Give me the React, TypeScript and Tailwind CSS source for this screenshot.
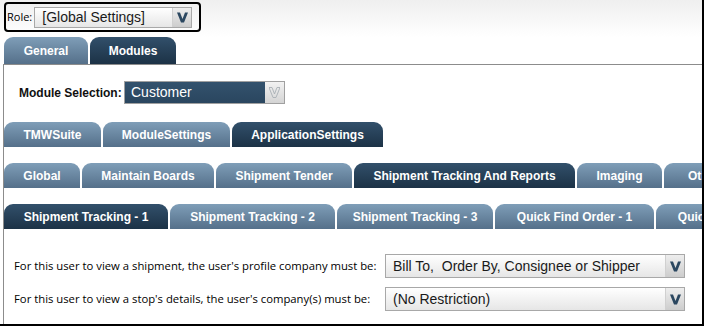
import clsx from 'clsx'

type TabDef = { label: string; w: string; active?: boolean }

const mainTabs: TabDef[] = [
  { label: 'General', w: 'w-[84px]' },
  { label: 'Modules', w: 'w-[86px]', active: true },
]

const suiteTabs: TabDef[] = [
  { label: 'TMWSuite', w: 'w-[97px]' },
  { label: 'ModuleSettings', w: 'w-[127px]' },
  { label: 'ApplicationSettings', w: 'w-[151px]', active: true },
]

const appTabs: TabDef[] = [
  { label: 'Global', w: 'w-[76px]' },
  { label: 'Maintain Boards', w: 'w-[132px]' },
  { label: 'Shipment Tender', w: 'w-[136px]' },
  { label: 'Shipment Tracking And Reports', w: 'w-[221px]', active: true },
  { label: 'Imaging', w: 'w-[85px]' },
  { label: 'Other', w: 'w-[80px]' },
]

const trackingTabs: TabDef[] = [
  { label: 'Shipment Tracking - 1', w: 'w-[164px]', active: true },
  { label: 'Shipment Tracking - 2', w: 'w-[165px]' },
  { label: 'Shipment Tracking - 3', w: 'w-[156px]' },
  { label: 'Quick Find Order - 1', w: 'w-[159px]' },
  { label: 'Quick Find Order - 2', w: 'w-[159px]' },
]

function TabRow({ tabs, tall }: { tabs: TabDef[]; tall?: boolean }) {
  return (
    <div className={clsx('flex gap-[2px]', tall ? 'h-[27px]' : 'h-[25px]')}>
      {tabs.map((t) => (
        <div
          key={t.label}
          className={clsx(
            'shrink-0 flex items-center justify-center rounded-t-[9px] text-white font-bold text-[12px] whitespace-nowrap',
            t.w,
            t.active
              ? 'bg-linear-to-b from-[#32506b] to-[#1c3246]'
              : 'bg-linear-to-b from-[#7f9eb8] to-[#55708a]'
          )}
        >
          {t.label}
        </div>
      ))}
    </div>
  )
}

function Chevron({ hollow }: { hollow?: boolean }) {
  return (
    <svg width="11" height="11" viewBox="0 0 11 11">
      <polygon
        points="0,0.5 3,0.5 5.5,7 8,0.5 11,0.5 7,10.5 4,10.5"
        fill={hollow ? 'none' : '#2b4760'}
        stroke={hollow ? '#a9b0b6' : 'none'}
        strokeWidth={hollow ? 0.9 : 0}
      />
    </svg>
  )
}

function Select({ value, w, h }: { value: string; w: string; h: string }) {
  return (
    <div className={clsx('shrink-0 flex border border-[#a8a8a8] bg-linear-to-b from-white to-[#e6e6e6]', w, h)}>
      <div className="flex-1 flex items-center pl-[7px] text-[14px] text-[#1a1a1a] whitespace-pre [font-family:'Liberation_Sans',Arial,sans-serif]">
        {value}
      </div>
      <div className="w-[19px] flex items-center justify-center bg-linear-to-b from-[#eeeeee] to-[#cdcdcd] border-l border-[#d0d0d0]">
        <Chevron />
      </div>
    </div>
  )
}

export default function App() {
  return (
    <div className="w-[704px] h-[326px] overflow-hidden bg-white border-r-2 border-b-2 border-black flex flex-col [font-family:'Liberation_Sans',Arial,sans-serif]">
      <div className="bg-linear-to-b from-[#efefef] to-white pt-[2px] pl-[4px] h-[37px] shrink-0">
        <div className="w-[197px] h-[30px] border-2 border-black rounded-[4px] flex items-center pl-[1px] gap-[2px]">
          <span className="text-[11px] text-black [font-family:'Open_Sans',sans-serif]">Role:</span>
          <Select value="[Global Settings]" w="w-[158px]" h="h-[21px]" />
        </div>
      </div>

      <div className="pl-[4px] shrink-0">
        <TabRow tabs={mainTabs} tall />
      </div>

      <div className="flex-1 ml-[3px] border-t border-l border-[#8c8c8c] flex flex-col">
        <div className="flex items-center mt-[16px] pl-[15px] gap-[4px]">
          <span className="text-[12px] font-bold text-[#111] w-[101px] whitespace-nowrap">Module Selection:</span>
          <div className="flex w-[161px] h-[23px] border border-[#a0a0a0] bg-linear-to-b from-[#33526d] to-[#2a465f]">
            <div className="flex-1 flex items-center pl-[6px] text-[14px] text-white">Customer</div>
            <div className="w-[19px] flex items-center justify-center bg-linear-to-b from-[#f2f2f2] to-[#d4d4d4]">
              <Chevron hollow />
            </div>
          </div>
        </div>

        <div className="mt-[18px]">
          <TabRow tabs={suiteTabs} />
        </div>
        <div className="mt-[16px]">
          <TabRow tabs={appTabs} />
        </div>
        <div className="mt-[16px]">
          <TabRow tabs={trackingTabs} />
        </div>

        <div className="flex flex-col gap-[9px] mt-[25px] pl-[10px] pr-[17px] text-[11.3px] text-black [font-family:'Open_Sans',sans-serif]">
          <div className="flex items-center justify-between">
            <span className="whitespace-nowrap">For this user to view a shipment, the user's profile company must be:</span>
            <Select value="Bill To,  Order By, Consignee or Shipper" w="w-[300px]" h="h-[24px]" />
          </div>
          <div className="flex items-center justify-between">
            <span className="whitespace-nowrap">For this user to view a stop's details, the user's company(s) must be:</span>
            <Select value="(No Restriction)" w="w-[300px]" h="h-[24px]" />
          </div>
        </div>
      </div>
    </div>
  )
}
